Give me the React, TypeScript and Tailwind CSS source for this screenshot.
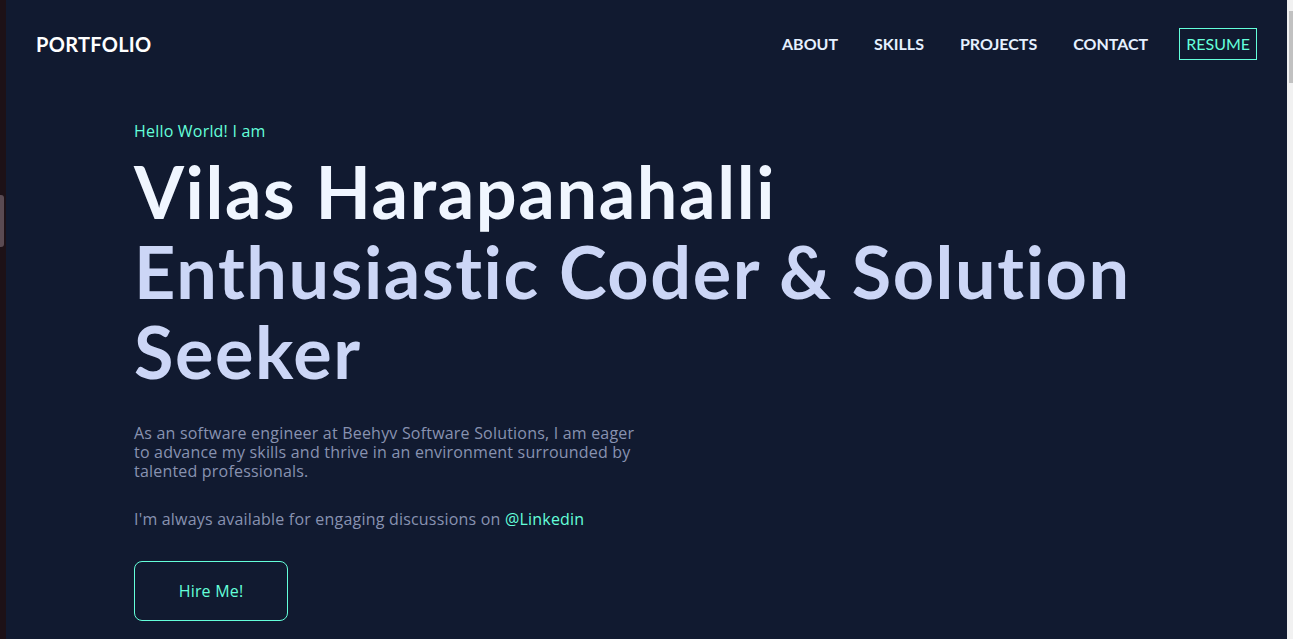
import React from 'react';

const navLinks = ['ABOUT', 'SKILLS', 'PROJECTS', 'CONTACT'];

export default function App() {
    return (
        <div className="flex h-[639px] w-full overflow-hidden bg-[#1d1117] font-['Lato','Open_Sans',sans-serif]">
            {/* window edge */}
            <div className="relative w-[6px] shrink-0">
                <div className="absolute left-0 top-[195px] h-[52px] w-[4px] rounded-r-[3px] bg-[#5a4a52]" />
            </div>

            <div className="flex min-w-0 flex-1 flex-col bg-[#111a30]">
                {/* Header */}
                <header className="flex h-[88px] items-center justify-between px-[30px]">
                    <a href="#" className="text-[20px] font-bold tracking-[0.3px] text-white">PORTFOLIO</a>
                    <nav className="flex items-center gap-[36px]">
                        {navLinks.map((link) => (
                            <a key={link} href="#" className="text-[16px] font-bold text-[#e6f1ff]">
                                {link}
                            </a>
                        ))}
                        <a
                            href="#"
                            className="-ml-[5px] border border-[#64ffda] px-[6px] py-[3px] text-[16px] text-[#64ffda]"
                        >
                            RESUME
                        </a>
                    </nav>
                </header>

                {/* Hero */}
                <section className="pl-[128px] pt-[33px] font-['Open_Sans','Lato',sans-serif] tracking-[0.2px]">
                    <p className="text-[16px] leading-[20px] text-[#64ffda]">Hello World! I am</p>
                    <h1 className="mt-[10px] max-w-[1040px] font-['Lato',sans-serif] text-[72px] font-bold leading-[80px] tracking-[1.6px]">
                        <span className="block text-[#f0f6ff]">Vilas Harapanahalli</span>
                        <span className="block text-[#ccd6f6]">Enthusiastic Coder &amp; Solution Seeker</span>
                    </h1>
                    <p className="mt-[33px] max-w-[512px] text-[16px] leading-[19px] text-[#8892b0]">
                        As an software engineer at Beehyv Software Solutions, I am eager to advance my skills and
                        thrive in an environment surrounded by talented professionals.
                    </p>
                    <p className="mt-[29px] text-[16px] leading-[19px] text-[#8892b0]">
                        I'm always available for engaging discussions on{' '}
                        <a href="#" className="text-[#64ffda]">@Linkedin</a>
                    </p>
                    <button className="mt-[32px] h-[60px] w-[154px] rounded-[8px] border border-[#64ffda] text-[16px] text-[#64ffda]">
                        Hire Me!
                    </button>
                </section>
            </div>

            {/* scrollbar */}
            <div className="relative w-[6px] shrink-0 bg-[#f1f1f1]">
                <div className="absolute left-[2px] top-[11px] h-[72px] w-[4px] bg-[#c1c1c1]" />
            </div>
        </div>
    );
}
